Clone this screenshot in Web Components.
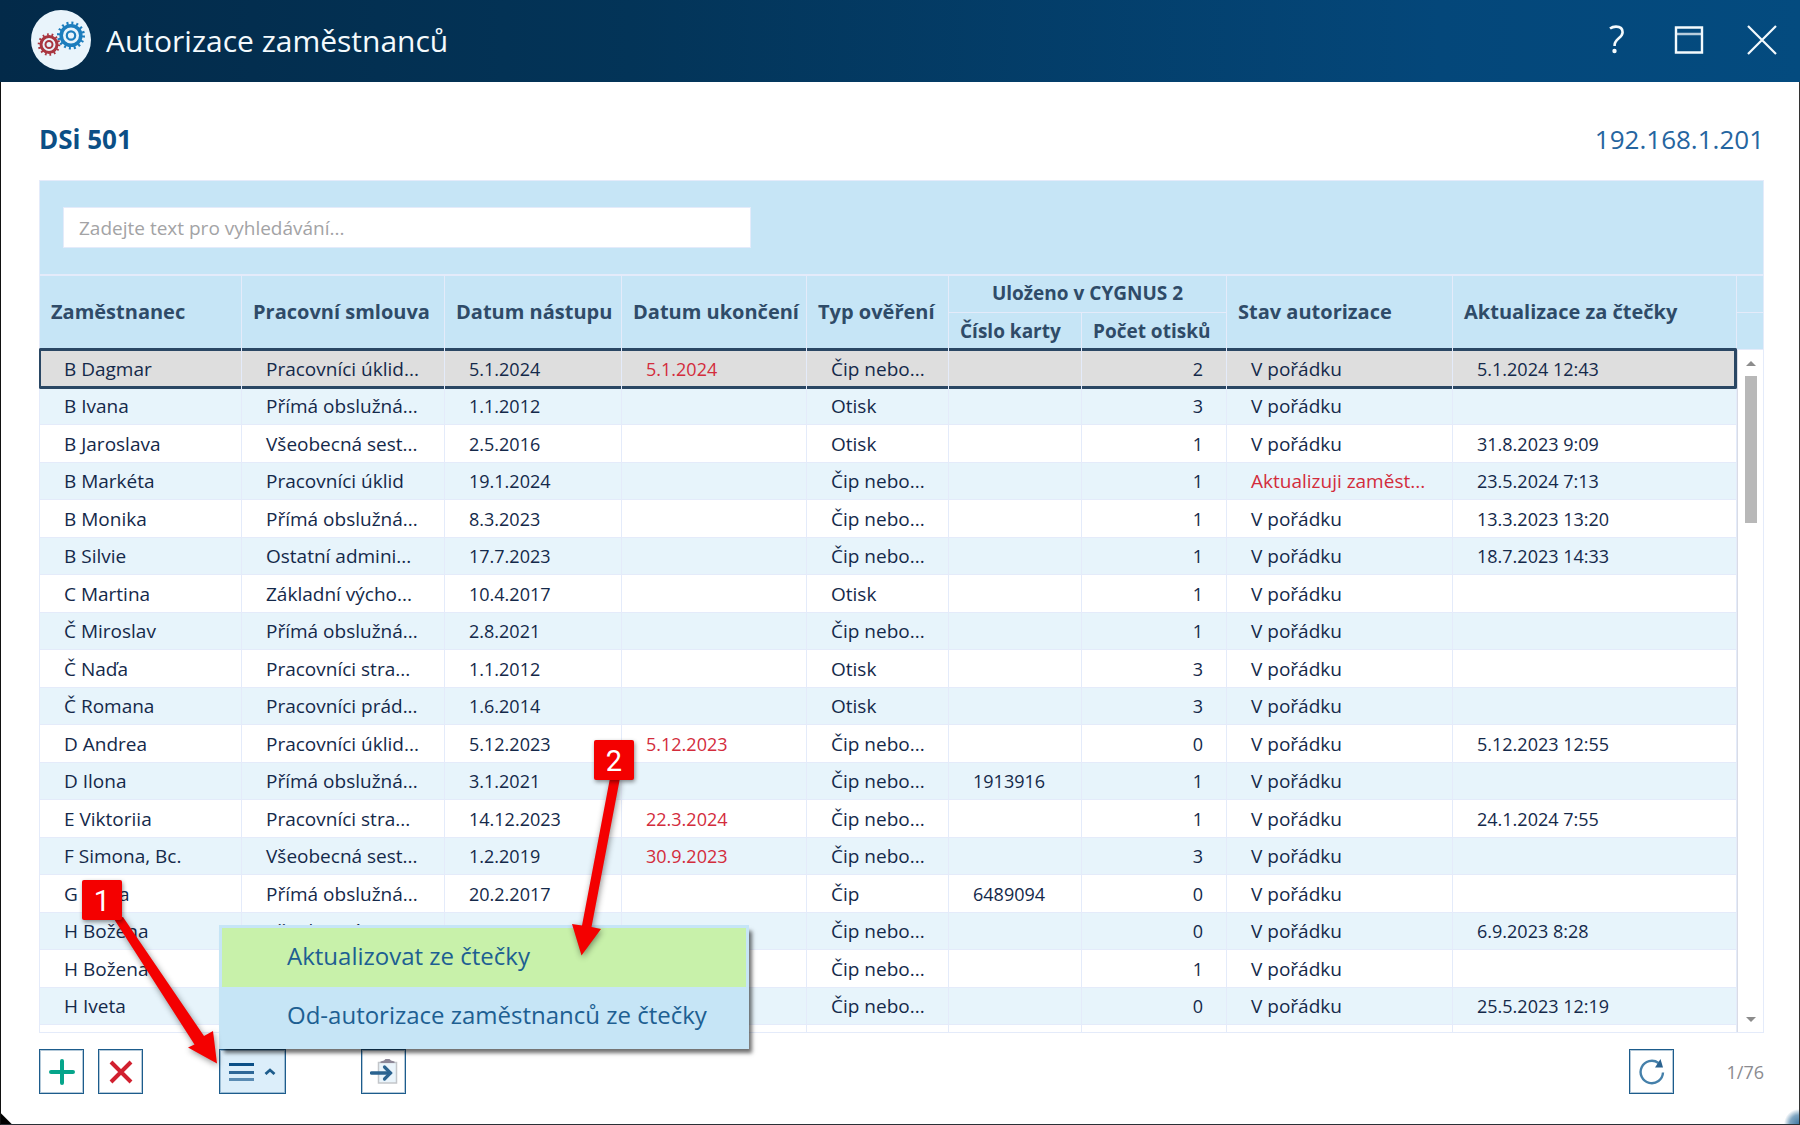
<!DOCTYPE html>
<html lang="cs">
<head>
<meta charset="utf-8">
<meta name="viewport" content="width=device-width, initial-scale=1">
<title>Autorizace zaměstnanců</title>
<style>
  body {
    margin: 0;
    font-family: "Open Sans", "Noto Sans", sans-serif;
    font-size: 18px;
    color: #14294a;
  }
</style>
</head>
<body>
<app-window caption="Autorizace zaměstnanců">
  <device-heading>
    <span slot="name">DSi 501</span>
    <span slot="address">192.168.1.201</span>
  </device-heading>
  <employee-grid></employee-grid>
  <grid-toolbar>
    <context-menu slot="menu">
      <button type="button" role="menuitem" class="active">Aktualizovat ze čtečky</button>
      <button type="button" role="menuitem">Od-autorizace zaměstnanců ze čtečky</button>
    </context-menu>
    <span slot="count">1/76</span>
  </grid-toolbar>
  <step-callouts slot="overlay"></step-callouts>
</app-window>

<script>
class AppWindow extends HTMLElement {
  constructor() {
    super();
    this._shadowRoot = this.attachShadow({ mode: 'open' });
  }

  connectedCallback() {
    this._shadowRoot.innerHTML = `
      <style>
      :host {
        display: flex;
        flex-direction: column;
        position: relative;
        box-sizing: border-box;
        min-height: 100vh;
        overflow: hidden;
        background: #fff;
      }
      header {
        display: flex;
        align-items: center;
        box-sizing: border-box;
        height: 82px;
        padding: 0 18px 2px 31px;
        background: linear-gradient(90deg, #032a49, #033458 35%, #04477a 80%, #044b7f);
        color: #f4fafd;
      }
      .logo {
        width: 60px;
        height: 60px;
      }
      h1 {
        flex: 1;
        margin: 2px 0 0 15px;
        font-size: 30px;
        font-weight: 400;
        line-height: 40px;
      }
      .controls {
        display: flex;
        gap: 33px;
      }
      .controls button {
        width: 40px;
        height: 40px;
        padding: 0;
        border: 0;
        background: none;
        color: inherit;
      }
      .controls svg {
        display: block;
      }
      main {
        flex: 1;
        padding: 0 35px 30px 38px;
        border-left: 1px solid #111;
        border-right: 1px solid #333;
        border-bottom: 1px solid #2b3036;
        background:
          linear-gradient(45deg, #000 7px, transparent 8px) left bottom / 12px 12px no-repeat,
          radial-gradient(circle at 100% 100%, #3f78a3 0, #7fa5c1 9px, transparent 15px) right bottom / 16px 16px no-repeat;
      }
      </style>
      <header>
        <svg class="logo" viewBox="0 0 60 60" aria-hidden="true">
          <circle cx="30" cy="30" r="30" fill="#e9f4fb"/>
          <g fill="none" stroke="#1c7dbd">
            <circle cx="40" cy="25.500" r="9.800" stroke-width="3.600"/>
            <circle cx="40" cy="25.500" r="12.500" stroke-width="3" stroke-dasharray="2 2.910"/>
            <circle cx="40" cy="25.500" r="4.200" stroke-width="2.200"/>
          </g>
          <g fill="none" stroke="#a93640">
            <circle cx="18" cy="34.500" r="8" stroke-width="3"/>
            <circle cx="18" cy="34.500" r="10" stroke-width="2.600" stroke-dasharray="1.700 2.788"/>
            <circle cx="18" cy="34.500" r="3.500" stroke-width="2"/>
          </g>
        </svg>
        <h1>${this.getAttribute('caption')}</h1>
        <div class="controls">
          <button type="button" aria-label="Nápověda">
            <svg width="40" height="40" viewBox="0 0 40 40" fill="none" stroke="currentColor" stroke-width="2.600">
              <path d="M14 8.500c2-1.500 4-1.900 6-1.900 4 0 6.600 2 6.600 5.600 0 5.800-8 6.300-8 12.800v1"/>
              <circle cx="18.500" cy="31" r="1.300" fill="currentColor" stroke-width="1.800"/>
            </svg>
          </button>
          <button type="button" aria-label="Maximalizovat">
            <svg width="40" height="40" viewBox="0 0 40 40" fill="none" stroke="currentColor">
              <path d="M7 7.500h26v25H7z" stroke-width="2.400"/>
              <path d="M7 14h26" stroke-width="2.500" opacity=".75"/>
            </svg>
          </button>
          <button type="button" aria-label="Zavřít">
            <svg width="40" height="40" viewBox="0 0 40 40" fill="none" stroke="currentColor" stroke-width="2.200">
              <path d="M6 6l28 28M34 6L6 34"/>
            </svg>
          </button>
        </div>
      </header>
      <main><slot></slot></main>
      <slot name="overlay"></slot>
    `;
  }
}
customElements.define('app-window', AppWindow);

class DeviceHeading extends HTMLElement {
  constructor() {
    super();
    this._shadowRoot = this.attachShadow({ mode: 'open' });
    this._shadowRoot.innerHTML = `
      <style>
      :host {
        display: flex;
        justify-content: space-between;
        align-items: center;
        padding: 37px 0 21px;
        font-size: 26px;
        line-height: 40px;
        color: #0b4f86;
      }
      h2 {
        margin: 0;
        font-size: inherit;
        font-weight: 700;
      }
      p {
        margin: 0;
        color: #2565a0;
      }
      </style>
      <h2><slot name="name"></slot></h2>
      <p><slot name="address"></slot></p>
    `;
  }
}
customElements.define('device-heading', DeviceHeading);

class EmployeeGrid extends HTMLElement {
  constructor() {
    super();
    this._shadowRoot = this.attachShadow({ mode: 'open' });
    // name, contract, start, end, verification, card, prints, state, updated
    this._rows = [
      ['B Dagmar', 'Pracovníci úklid...', '5.1.2024', '5.1.2024', 'Čip nebo...', '', '2', 'V pořádku', '5.1.2024 12:43'],
      ['B Ivana', 'Přímá obslužná...', '1.1.2012', '', 'Otisk', '', '3', 'V pořádku', ''],
      ['B Jaroslava', 'Všeobecná sest...', '2.5.2016', '', 'Otisk', '', '1', 'V pořádku', '31.8.2023 9:09'],
      ['B Markéta', 'Pracovníci úklid', '19.1.2024', '', 'Čip nebo...', '', '1', 'Aktualizuji zaměst...', '23.5.2024 7:13'],
      ['B Monika', 'Přímá obslužná...', '8.3.2023', '', 'Čip nebo...', '', '1', 'V pořádku', '13.3.2023 13:20'],
      ['B Silvie', 'Ostatní admini...', '17.7.2023', '', 'Čip nebo...', '', '1', 'V pořádku', '18.7.2023 14:33'],
      ['C Martina', 'Základní výcho...', '10.4.2017', '', 'Otisk', '', '1', 'V pořádku', ''],
      ['Č Miroslav', 'Přímá obslužná...', '2.8.2021', '', 'Čip nebo...', '', '1', 'V pořádku', ''],
      ['Č Naďa', 'Pracovníci stra...', '1.1.2012', '', 'Otisk', '', '3', 'V pořádku', ''],
      ['Č Romana', 'Pracovníci prád...', '1.6.2014', '', 'Otisk', '', '3', 'V pořádku', ''],
      ['D Andrea', 'Pracovníci úklid...', '5.12.2023', '5.12.2023', 'Čip nebo...', '', '0', 'V pořádku', '5.12.2023 12:55'],
      ['D Ilona', 'Přímá obslužná...', '3.1.2021', '', 'Čip nebo...', '1913916', '1', 'V pořádku', ''],
      ['E Viktoriia', 'Pracovníci stra...', '14.12.2023', '22.3.2024', 'Čip nebo...', '', '1', 'V pořádku', '24.1.2024 7:55'],
      ['F Simona, Bc.', 'Všeobecná sest...', '1.2.2019', '30.9.2023', 'Čip nebo...', '', '3', 'V pořádku', ''],
      ['G Hana', 'Přímá obslužná...', '20.2.2017', '', 'Čip', '6489094', '0', 'V pořádku', ''],
      ['H Božena', 'Všeobecná sest...', '', '', 'Čip nebo...', '', '0', 'V pořádku', '6.9.2023 8:28'],
      ['H Božena', '', '', '', 'Čip nebo...', '', '1', 'V pořádku', ''],
      ['H Iveta', '', '', '', 'Čip nebo...', '', '0', 'V pořádku', '25.5.2023 12:19'],
    ];
  }

  connectedCallback() {
    this.render();
  }

  render() {
    this._shadowRoot.innerHTML = `
      <style>
      :host {
        --line: #e4ebfa;
        --head: #c6e5f6;
        --mark: #2a4764;
        display: block;
        border: 1px solid var(--line);
      }
      .search {
        padding: 26px 23px;
        background: var(--head);
        border-bottom: 2px solid var(--line);
      }
      input {
        display: block;
        box-sizing: border-box;
        width: 41%;
        height: 41px;
        padding: 0 15px;
        border: 1px solid var(--line);
        background: #fff;
        font: inherit;
        font-size: 19px;
        color: inherit;
      }
      input::placeholder {
        color: #a3a3a5;
        opacity: 1;
      }
      .body {
        display: flex;
      }
      table {
        flex: 1;
        width: 0;
        table-layout: fixed;
        border-collapse: separate;
        border-spacing: 0;
      }
      th, td {
        box-sizing: border-box;
        border-right: 1px solid var(--line);
        line-height: 24px;
        text-align: left;
        white-space: nowrap;
      }
      th {
        height: 37px;
        padding: 0 0 2px 11px;
        background: var(--head);
        color: #2f4b68;
        font-size: 20px;
        font-weight: 700;
      }
      th[colspan], tr + tr th {
        font-size: 19px;
      }
      th[colspan] {
        padding-left: 0;
        border-bottom: 1px solid var(--line);
        text-align: center;
      }
      td {
        height: 38px;
        padding: 0 23px 0 24px;
        border-bottom: 1px solid var(--line);
      }
      tr:nth-child(even) td {
        height: 37px;
        background: #e7f4fb;
      }
      td.text {
        font-size: 19px;
      }
      td.number {
        text-align: right;
      }
      td.alert {
        color: #d32c3c;
      }
      tr.selected td {
        position: relative;
        border-bottom: 0;
        background: #dedede;
      }
      /* frame is drawn per cell so the column lines stay visible through it */
      tr.selected td::after {
        content: "";
        position: absolute;
        inset: -2px 0 -1px;
        border: 0 solid var(--mark);
        border-width: 3px 0;
      }
      tr.selected td:first-child::after {
        left: -1px;
        border-left-width: 2px;
        border-radius: 2px 0 0 2px;
      }
      tr.selected td:last-child::after {
        right: -1px;
        border-right-width: 3px;
        border-radius: 0 2px 2px 0;
      }
      tr.rest td {
        height: 7px;
        border-bottom: 0;
        line-height: 0;
      }
      .rail {
        display: flex;
        flex-direction: column;
        width: 26px;
      }
      .rail .head {
        box-sizing: border-box;
        height: 37px;
        background: var(--head);
        border-bottom: 1px solid var(--line);
      }
      .track {
        flex: 1;
        display: flex;
        flex-direction: column;
        align-items: center;
        padding: 11px 0 10px;
        border-left: 1px solid #d9dce6;
      }
      .thumb {
        width: 12px;
        height: 147px;
        margin: 10px 0 auto;
        background: #b8b8b8;
      }
      </style>
      <div class="search">
        <input type="text" aria-label="Vyhledávání" placeholder="Zadejte text pro vyhledávání...">
      </div>
      <div class="body">
        <table>
          <colgroup>
            <col style="width: 202px"><col style="width: 203px"><col style="width: 177px">
            <col style="width: 185px"><col style="width: 142px"><col style="width: 133px">
            <col style="width: 145px"><col style="width: 226px"><col>
          </colgroup>
          <thead>
            <tr>
              <th rowspan="2">Zaměstnanec</th>
              <th rowspan="2">Pracovní smlouva</th>
              <th rowspan="2">Datum nástupu</th>
              <th rowspan="2">Datum ukončení</th>
              <th rowspan="2">Typ ověření</th>
              <th colspan="2">Uloženo v CYGNUS 2</th>
              <th rowspan="2">Stav autorizace</th>
              <th rowspan="2">Aktualizace za čtečky</th>
            </tr>
            <tr>
              <th>Číslo karty</th>
              <th>Počet otisků</th>
            </tr>
          </thead>
          <tbody></tbody>
        </table>
        <div class="rail">
          <div class="head"></div>
          <div class="head"></div>
          <div class="track">
            <svg width="10" height="5" viewBox="0 0 10 5"><path d="M0 5l5-5 5 5z" fill="#8c8c8c"/></svg>
            <div class="thumb"></div>
            <svg width="10" height="5" viewBox="0 0 10 5"><path d="M0 0l5 5 5-5z" fill="#8c8c8c"/></svg>
          </div>
        </div>
      </div>
    `;

    const textColumns = [0, 1, 4, 7];
    const body = this._shadowRoot.querySelector('tbody');
    this._rows.forEach((row, index) => {
      const tr = document.createElement('tr');
      if (index === 0) tr.classList.add('selected');
      row.forEach((text, column) => {
        const td = document.createElement('td');
        td.textContent = text;
        if (textColumns.includes(column)) td.classList.add('text');
        if (column === 6) td.classList.add('number');
        if (column === 3 || text.startsWith('Aktualizuji')) td.classList.add('alert');
        tr.appendChild(td);
      });
      body.appendChild(tr);
    });

    const rest = document.createElement('tr');
    rest.classList.add('rest');
    rest.innerHTML = '<td></td>'.repeat(9);
    body.appendChild(rest);
  }
}
customElements.define('employee-grid', EmployeeGrid);

class GridToolbar extends HTMLElement {
  constructor() {
    super();
    this._shadowRoot = this.attachShadow({ mode: 'open' });
    this._shadowRoot.innerHTML = `
      <style>
      :host {
        display: flex;
        align-items: center;
        margin-top: 16px;
      }
      button {
        display: flex;
        align-items: center;
        justify-content: center;
        box-sizing: border-box;
        width: 45px;
        height: 45px;
        padding: 0;
        border: 1px solid #1d5c8c;
        outline: 1px solid #1d5c8c55;
        outline-offset: -2px;
        background: #fff;
      }
      .delete {
        margin-left: 14px;
      }
      .more {
        position: relative;
        margin: 0 75px 0 76px;
      }
      .more > button {
        gap: 10px;
        width: 67px;
        background: #dceefa;
      }
      slot[name="menu"] {
        display: block;
        position: absolute;
        left: 0;
        bottom: 100%;
      }
      .refresh {
        margin-left: auto;
      }
      .count {
        min-width: 90px;
        color: #8b8b8f;
        text-align: right;
      }
      </style>
      <button type="button" aria-label="Přidat">
        <svg width="26" height="26" viewBox="0 0 26 26" stroke="#06a58b" stroke-width="4" stroke-linecap="round"><path d="M13 2v22M2 13h22"/></svg>
      </button>
      <button type="button" class="delete" aria-label="Odstranit">
        <svg width="24" height="24" viewBox="0 0 24 24" stroke="#d1202f" stroke-width="4"><path d="M2 2l20 20M22 2L2 22"/></svg>
      </button>
      <div class="more">
        <button type="button" aria-haspopup="menu" aria-expanded="true" aria-label="Další akce">
          <svg width="25" height="20" viewBox="0 0 25 20"><path d="M0 1h25v3H0z" fill="#0b4f86"/><path d="M0 9h25v3H0z" fill="#2e6797"/><path d="M0 16h25v3H0z" fill="#5a8bb3"/></svg>
          <svg width="12" height="7" viewBox="0 0 12 7" fill="none" stroke="#1d5c8c" stroke-width="2.800"><path d="M1.500 6L6 2l4.500 4"/></svg>
        </button>
        <slot name="menu"></slot>
      </div>
      <button type="button" aria-label="Export">
        <svg width="28" height="28" viewBox="0 0 28 28" fill="none">
          <path d="M8.500 4.500h18v20.500h-18z" fill="#eaf4fb" stroke="#c3c6ca" stroke-width="1.500"/>
          <path d="M10.500 5V3.500L14 2.500 15.500 1h4L21 2.500l3.500 1V5z" fill="#8d8797"/>
          <path d="M1.500 15H20" stroke="#2b6390" stroke-width="3.500" stroke-linecap="round"/>
          <path d="M14.500 9l6 6-6 6" stroke="#2b6390" stroke-width="3.200" stroke-linecap="round"/>
        </svg>
      </button>
      <button type="button" class="refresh" aria-label="Obnovit">
        <svg width="28" height="28" viewBox="0 0 28 28" fill="none">
          <path d="M25 14.500a11.200 11.200 0 1 1-4.500-9.500" stroke="#4580aa" stroke-width="2.400"/>
          <path d="M22.500 1l2.500 8.500h-8z" fill="#2b6390"/>
        </svg>
      </button>
      <div class="count"><slot name="count"></slot></div>
    `;
  }
}
customElements.define('grid-toolbar', GridToolbar);

class ContextMenu extends HTMLElement {
  constructor() {
    super();
    this._shadowRoot = this.attachShadow({ mode: 'open' });
    this._shadowRoot.innerHTML = `
      <style>
      :host {
        display: flex;
        flex-direction: column;
        box-sizing: border-box;
        min-width: 530px;
        padding: 3px;
        background: #c6e5f6;
        box-shadow: 4px 5px 4px -1px #00000090;
      }
      ::slotted(button) {
        height: 59px;
        padding: 0 35px 3px 65px;
        border: 0;
        background: none;
        color: #1d5f92;
        font: inherit;
        font-size: 24px;
        line-height: 34px;
        text-align: left;
        white-space: nowrap;
      }
      ::slotted(.active) {
        background: #c8f1aa;
      }
      </style>
      <slot></slot>
    `;
    this.setAttribute('role', 'menu');
  }
}
customElements.define('context-menu', ContextMenu);

class StepCallouts extends HTMLElement {
  constructor() {
    super();
    this._shadowRoot = this.attachShadow({ mode: 'open' });
    this._shadowRoot.innerHTML = `
      <style>
      :host {
        position: absolute;
        inset: 0;
        pointer-events: none;
      }
      svg {
        position: absolute;
        filter: drop-shadow(1px 2px 3px #00000070);
      }
      .step {
        position: absolute;
        width: 40px;
        height: 40px;
        border-radius: 2px;
        background: #f40000;
        box-shadow: 1px 2px 4px #00000070;
        color: #fff;
        font: 29px/42px Roboto, "Liberation Sans", sans-serif;
        text-align: center;
      }
      </style>
      <svg width="1800" height="1125" viewBox="0 0 1800 1125" fill="#f40000">
        <path d="M114 919L194.500 1044.500 188 1047.500 217 1063.500 213 1031 204 1036 123 917z"/>
        <path d="M610 778L582 925.500 572 924 581.500 955.500 601 929 591.500 927 620 778z"/>
      </svg>
      <div class="step" style="left: 82px; top: 880px">1</div>
      <div class="step" style="left: 594px; top: 740px">2</div>
    `;
  }
}
customElements.define('step-callouts', StepCallouts);
</script>
</body>
</html>
